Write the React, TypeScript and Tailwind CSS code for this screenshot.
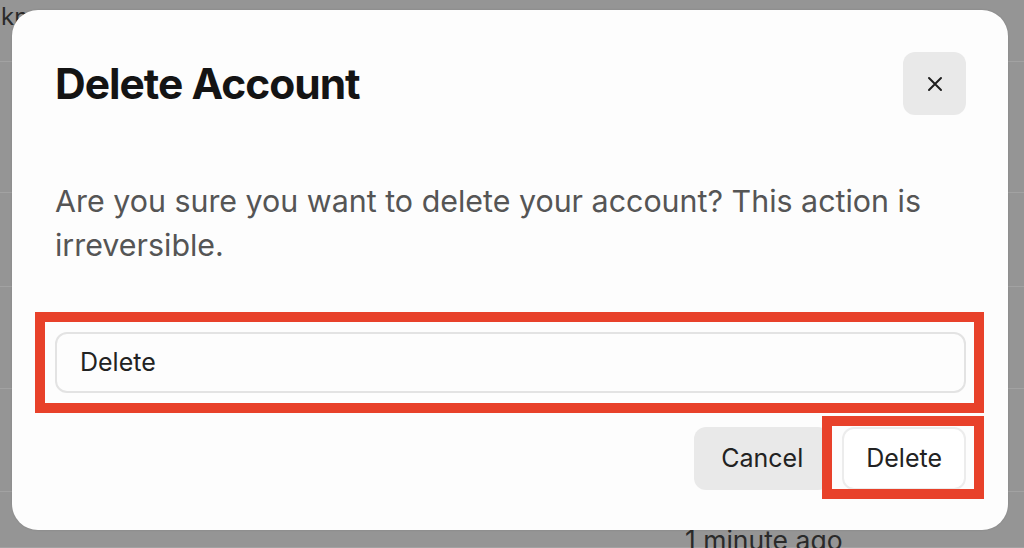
import React from "react";

const rows = [
  { h: "h-[62px]", text: "Unknown", pos: "-ml-[31px] pt-[3px]" },
  { h: "h-[131px]", text: "", pos: "" },
  { h: "h-[94px]", text: "", pos: "" },
  { h: "h-[102px]", text: "", pos: "" },
  { h: "h-[103px]", text: "", pos: "" },
  { h: "h-[56px]", text: "1 minute ago", pos: "pl-[685px] pt-[34px] text-[26.5px]" },
];

function CloseIcon() {
  return (
    <svg width="18" height="18" viewBox="0 0 18 18" fill="none">
      <path d="M3 3L15 15M15 3L3 15" stroke="#1f1f1f" strokeWidth="2" strokeLinecap="round" />
    </svg>
  );
}

export default function App() {
  return (
    <div
      className="relative w-[1024px] h-[548px] overflow-hidden bg-[#959595]"
      style={{ fontFamily: "Inter, 'Noto Sans', sans-serif" }}
    >
      {/* dimmed page underneath */}
      <div className="flex flex-col">
        {rows.map((r, i) => (
          <div
            key={i}
            className={`${r.h} whitespace-nowrap border-b border-[#a2a2a2] text-[24px] leading-[28px] text-[#2a2a2a] ${r.pos}`}
          >
            {r.text}
          </div>
        ))}
      </div>

      {/* dialog */}
      <div className="absolute left-[12px] top-[10px] w-[996px] h-[520px] rounded-[26px] bg-[#fdfdfd] shadow-[0_0_2px_rgba(0,0,0,0.15)] flex flex-col pl-[43px] pr-[42px] pt-[42px]">
        <div className="flex items-center justify-between">
          <h2 className="text-[42.5px] leading-[50px] font-bold tracking-[-1px] text-[#141414]">
            Delete Account
          </h2>
          <button className="w-[63px] h-[63px] rounded-[12px] bg-[#e9e9e9] flex items-center justify-center">
            <CloseIcon />
          </button>
        </div>

        <p className="mt-[64px] text-[30.4px] leading-[44px] text-[#555555] pr-[20px]">
          Are you sure you want to delete your account? This action is irreversible.
        </p>

        <div className="mt-[65px] h-[61px] rounded-[12px] border-2 border-[#e3e3e3] bg-[#fdfdfd] flex items-center pl-[23px] text-[25px] text-[#222222]">
          Delete
        </div>

        <div className="mt-[34px] flex justify-end gap-[12px]">
          <button className="h-[63px] px-[27px] rounded-[12px] bg-[#e9e9e9] text-[25px] text-[#222222]">
            Cancel
          </button>
          <button className="h-[63px] px-[22px] rounded-[12px] bg-white border-2 border-[#ececec] text-[25px] text-[#222222]">
            Delete
          </button>
        </div>
      </div>

      {/* annotation outlines */}
      <div className="absolute left-[35px] top-[312px] w-[949px] h-[101px] border-[10px] border-[#e8412a]" />
      <div className="absolute left-[822px] top-[416px] w-[162px] h-[83px] border-[10px] border-[#e8412a]" />
    </div>
  );
}
